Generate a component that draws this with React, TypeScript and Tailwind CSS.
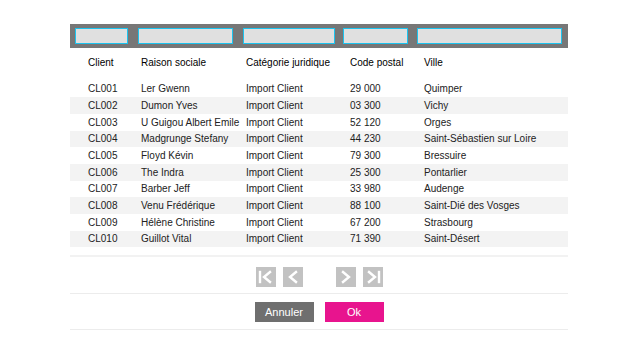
const rows = [
  ["CL001", "Ler Gwenn", "Import Client", "29 000", "Quimper"],
  ["CL002", "Dumon Yves", "Import Client", "03 300", "Vichy"],
  ["CL003", "U Guigou Albert Emile", "Import Client", "52 120", "Orges"],
  ["CL004", "Madgrunge Stefany", "Import Client", "44 230", "Saint-Sébastien sur Loire"],
  ["CL005", "Floyd Kévin", "Import Client", "79 300", "Bressuire"],
  ["CL006", "The Indra", "Import Client", "25 300", "Pontarlier"],
  ["CL007", "Barber Jeff", "Import Client", "33 980", "Audenge"],
  ["CL008", "Venu Frédérique", "Import Client", "88 100", "Saint-Dié des Vosges"],
  ["CL009", "Hélène Christine", "Import Client", "67 200", "Strasbourg"],
  ["CL010", "Guillot Vital", "Import Client", "71 390", "Saint-Désert"],
];

const headers = ["Client", "Raison sociale", "Catégorie juridique", "Code postal", "Ville"];

function Cells({ values }: { values: string[] }) {
  return (
    <>
      <div className="w-[71px] shrink-0 pl-[18px]">{values[0]}</div>
      <div className="w-[105px] shrink-0 whitespace-nowrap">{values[1]}</div>
      <div className="w-[104px] shrink-0">{values[2]}</div>
      <div className="w-[74px] shrink-0">{values[3]}</div>
      <div className="flex-1 whitespace-nowrap">{values[4]}</div>
    </>
  );
}

function PageBtn({ kind }: { kind: "first" | "prev" | "next" | "last" }) {
  return (
    <button className="w-[20px] h-[20px] bg-[#c2c2c2] flex items-center justify-center">
      <svg width="20" height="20" viewBox="0 0 20 20" fill="none" stroke="white" strokeWidth="2.4" strokeLinecap="square">
        {kind === "first" && (
          <>
            <path d="M4 5v10" />
            <path d="M14 5l-6 5 6 5" />
          </>
        )}
        {kind === "prev" && <path d="M13 5l-6 5 6 5" />}
        {kind === "next" && <path d="M7 5l6 5-6 5" />}
        {kind === "last" && (
          <>
            <path d="M6 5l6 5-6 5" />
            <path d="M16 5v10" />
          </>
        )}
      </svg>
    </button>
  );
}

export default function App() {
  return (
    <div className="w-[640px] h-[358px] bg-white font-['Liberation_Sans',Arial,sans-serif] text-[10px] text-[#222]">
      <div className="ml-[70px] w-[498px] pt-[24px]">
        <div className="h-[24px] bg-[#777777] flex items-center pl-[5px]">
          <input className="w-[53px] h-[16px] bg-[#e0e0e0] border border-[#1cc3ee] outline-none" />
          <input className="ml-[10px] w-[95px] h-[16px] bg-[#e0e0e0] border border-[#1cc3ee] outline-none" />
          <input className="ml-[10px] w-[92px] h-[16px] bg-[#e0e0e0] border border-[#1cc3ee] outline-none" />
          <input className="ml-[8px] w-[65px] h-[16px] bg-[#e0e0e0] border border-[#1cc3ee] outline-none" />
          <input className="ml-[9px] w-[145px] h-[16px] bg-[#e0e0e0] border border-[#1cc3ee] outline-none" />
        </div>

        <div className="h-[32.6px] pb-[4px] flex items-center text-black">
          <Cells values={headers} />
        </div>

        <div>
          {rows.map((r, i) => (
            <div
              key={r[0]}
              className={`h-[16.67px] flex items-center ${i % 2 === 1 ? "bg-[#f3f3f3]" : ""}`}
            >
              <Cells values={r} />
            </div>
          ))}
        </div>

        <div className="mt-[8px] h-[2px] bg-[#f2f2f2]" />

        <div className="mt-[10px] flex justify-center gap-[7px]">
          <PageBtn kind="first" />
          <PageBtn kind="prev" />
          <div className="w-[19px]" />
          <PageBtn kind="next" />
          <PageBtn kind="last" />
        </div>

        <div className="mt-[6px] h-[1px] bg-[#ececec]" />

        <div className="mt-[8px] flex justify-center gap-[11px]">
          <button className="w-[59px] h-[20px] bg-[#6f6f6f] text-white text-[11px]">Annuler</button>
          <button className="w-[59px] h-[20px] bg-[#e8148e] text-white text-[11px]">Ok</button>
        </div>

        <div className="mt-[7px] h-[1px] bg-[#ececec]" />
      </div>
    </div>
  );
}
